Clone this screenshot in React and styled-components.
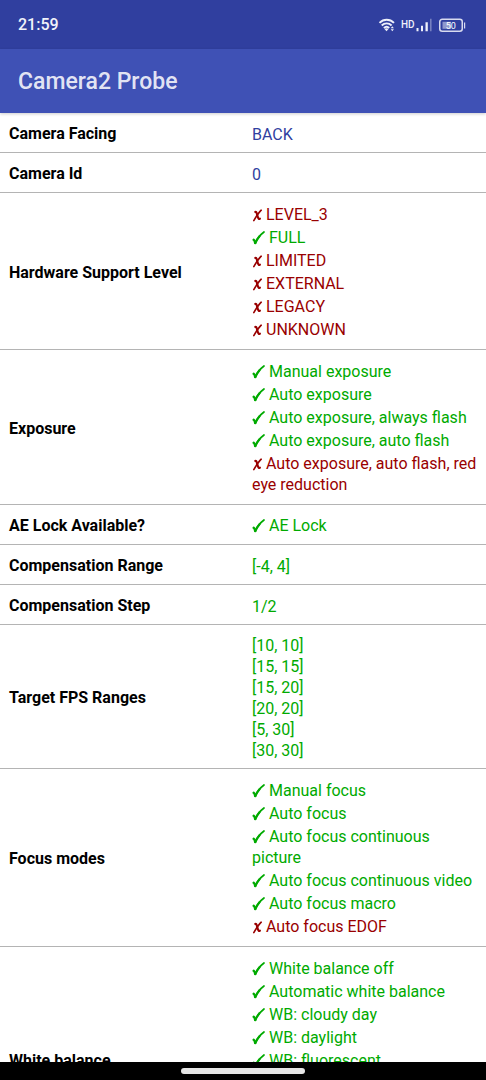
import React from "react";
import styled, { createGlobalStyle } from "styled-components";

const GlobalStyle = createGlobalStyle`
  * { box-sizing: border-box; }
  body {
    margin: 0;
    background: #fff;
    font-family: Roboto, "Liberation Sans", sans-serif;
  }
`;

const tones = { info: "#303f9f", yes: "#00aa00", no: "#990000" };

const Screen = styled.div`
  display: flex;
  flex-direction: column;
  height: 100vh;
`;

const StatusBar = styled.div`
  flex: none;
  display: flex;
  align-items: center;
  justify-content: space-between;
  height: 49px;
  padding: 0 20px 0 18px;
  background: #303f9f;
  color: #f2f3fa;
`;

const Clock = styled.time`
  font-size: 16px;
  line-height: 20px;
  font-weight: 500;
`;

const StatusIcons = styled.div`
  display: flex;
  align-items: center;
`;

const AppBar = styled.header`
  flex: none;
  position: relative;
  display: flex;
  align-items: center;
  height: 64px;
  padding: 2px 18px 0;
  background: #3f51b5;
  box-shadow: 0 1px 3px rgba(0, 0, 0, 0.2);
`;

const Title = styled.h1`
  margin: 0;
  font-size: 23px;
  line-height: 28px;
  font-weight: 500;
  color: rgba(255, 255, 255, 0.87);
`;

const Content = styled.main`
  flex: 1;
  min-height: 0;
  overflow-y: auto;
  scrollbar-width: none;
`;

const SpecTable = styled.table`
  width: 100%;
  table-layout: fixed;
  border-collapse: separate;
  border-spacing: 0;
  font-size: 16px;
  line-height: 21px;
`;

const SpecRow = styled.tr`
  height: 40px;
`;

const Label = styled.th`
  padding: 10px 9px 8px;
  border-bottom: 1px solid #b4b4b4;
  text-align: left;
  font-weight: 700;
  color: #000;
`;

const Value = styled.td`
  padding: ${(p) => (p.$marked ? "9px 9px 7px" : "10px 9px 7px")};
  border-bottom: 1px solid #b4b4b4;
  color: ${(p) => tones[p.$tone]};
`;

const MarkList = styled.ul`
  list-style: none;
  margin: 0;
  padding: ${(p) => (p.$several ? "1px 0" : "0")};
`;

const MarkItem = styled.li`
  padding: 1px 0;
  color: ${(p) => tones[p.$tone]};
`;

const MarkIcon = styled.svg`
  display: inline-block;
  margin-right: 4px;
  vertical-align: -2px;
  fill: none;
  stroke: currentColor;
  stroke-linecap: round;
  stroke-linejoin: round;
`;

const Line = styled.div``;

const NavBar = styled.footer`
  flex: none;
  display: flex;
  justify-content: center;
  height: 18px;
  padding-top: 6px;
  background: #000;
`;

const HomeHandle = styled.div`
  width: 124px;
  height: 6px;
  border-radius: 3px;
  background: #e6e6e6;
`;

function Check() {
  return (
    <MarkIcon width="13" height="14" viewBox="0 0 13 14" role="img" aria-label="Supported">
      <path d="M1.7 8.8C2.4 9.2 2.9 10.4 3.2 12" strokeWidth="2.4" />
      <path d="M3.3 12C5.100 7.800 8 4 12 1" strokeWidth="1.7" />
      <path d="M3.3 12C4.500 9.300 5.900 7.200 7.500 5.300" strokeWidth="2.1" />
    </MarkIcon>
  );
}

function Cross() {
  return (
    <MarkIcon width="10" height="14" viewBox="0 0 10 14" role="img" aria-label="Not supported">
      <path d="M9.2 2.200C6.600 4.700 4.300 8.400 1.800 12.600" strokeWidth="1.600" />
      <path d="M3.3 3.900C4 3.400 4.400 4.100 4.700 5.100L6 9.600C6.300 10.800 6.900 11.100 7.900 10.700" strokeWidth="2.100" />
    </MarkIcon>
  );
}

function StatusGlyphs() {
  return (
    <svg width="88" height="16" viewBox="0 0 88 16" role="img" aria-label="Wi-Fi, HD, signal, battery 50 percent">
      <g fill="none" stroke="#eef0fa" strokeWidth="1.900">
        <path d="M1.500 5.900C5.600 1.700 11.800 1.700 16 5.900" />
        <path d="M3.700 8.500C6.600 5.600 10.800 5.600 13.600 8.500" />
        <path d="M5.900 11C7.600 9.400 9.600 9.400 11.200 11" />
      </g>
      <path d="M6.500 12L8.500 14.300L10.500 12C9.300 11.100 7.800 11.100 6.500 12Z" fill="#eef0fa" />
      <path d="M12.700 11.200L14.300 9.200L15.900 11.200ZM12.700 12.200L14.300 14.200L15.900 12.200Z" fill="#eef0fa" />
      <text x="23" y="11" fontSize="10" fontWeight="500" fill="#eef0fa">HD</text>
      <path d="M38.500 11h2v3.200h-2zM43 8.700h2v5.500h-2zM47.500 5.200h2.300v9h-2.300z" fill="#eef0fa" />
      <path d="M52 1.700h1.600v12.500h-1.600z" fill="#7680c0" />
      <rect x="61.750" y="2.250" width="22.500" height="12" rx="2.500" fill="none" stroke="#d8dbef" strokeWidth="1.500" />
      <rect x="64.500" y="4.800" width="8.500" height="7" fill="#8f98cd" />
      <path d="M86 5.500h1.200v6h-1.200z" fill="#d8dbef" />
      <text x="72.800" y="11.700" fontSize="9" fontWeight="400" textAnchor="middle" fill="#fff">50</text>
    </svg>
  );
}

const yes = (text) => ({ text, ok: true });
const no = (text) => ({ text, ok: false });

const specs = [
  { label: "Camera Facing", tone: "info", lines: ["BACK"] },
  { label: "Camera Id", tone: "info", lines: ["0"] },
  {
    label: "Hardware Support Level",
    marks: [no("LEVEL_3"), yes("FULL"), no("LIMITED"), no("EXTERNAL"), no("LEGACY"), no("UNKNOWN")],
  },
  {
    label: "Exposure",
    marks: [
      yes("Manual exposure"),
      yes("Auto exposure"),
      yes("Auto exposure, always flash"),
      yes("Auto exposure, auto flash"),
      no("Auto exposure, auto flash, red eye reduction"),
    ],
  },
  { label: "AE Lock Available?", marks: [yes("AE Lock")] },
  { label: "Compensation Range", tone: "yes", lines: ["[-4, 4]"] },
  { label: "Compensation Step", tone: "yes", lines: ["1/2"] },
  {
    label: "Target FPS Ranges",
    tone: "yes",
    lines: ["[10, 10]", "[15, 15]", "[15, 20]", "[20, 20]", "[5, 30]", "[30, 30]"],
  },
  {
    label: "Focus modes",
    marks: [
      yes("Manual focus"),
      yes("Auto focus"),
      yes("Auto focus continuous picture"),
      yes("Auto focus continuous video"),
      yes("Auto focus macro"),
      no("Auto focus EDOF"),
    ],
  },
  {
    label: "White balance",
    marks: [
      yes("White balance off"),
      yes("Automatic white balance"),
      yes("WB: cloudy day"),
      yes("WB: daylight"),
      yes("WB: fluorescent"),
      yes("WB: incandescent"),
      yes("WB: shade"),
      yes("WB: twilight"),
      yes("WB: warm fluorescent"),
    ],
  },
];

function Spec({ label, tone, lines, marks }) {
  return (
    <SpecRow>
      <Label scope="row">{label}</Label>
      <Value $tone={tone} $marked={Boolean(marks)}>
        {marks ? (
          <MarkList $several={marks.length > 1}>
            {marks.map((m) => (
              <MarkItem key={m.text} $tone={m.ok ? "yes" : "no"}>
                {m.ok ? <Check /> : <Cross />}
                {m.text}
              </MarkItem>
            ))}
          </MarkList>
        ) : (
          lines.map((line) => <Line key={line}>{line}</Line>)
        )}
      </Value>
    </SpecRow>
  );
}

export default function App() {
  return (
    <Screen>
      <GlobalStyle />
      <StatusBar>
        <Clock>21:59</Clock>
        <StatusIcons>
          <StatusGlyphs />
        </StatusIcons>
      </StatusBar>
      <AppBar>
        <Title>Camera2 Probe</Title>
      </AppBar>
      <Content>
        <SpecTable>
          <tbody>
            {specs.map((spec) => (
              <Spec key={spec.label} {...spec} />
            ))}
          </tbody>
        </SpecTable>
      </Content>
      <NavBar>
        <HomeHandle />
      </NavBar>
    </Screen>
  );
}
